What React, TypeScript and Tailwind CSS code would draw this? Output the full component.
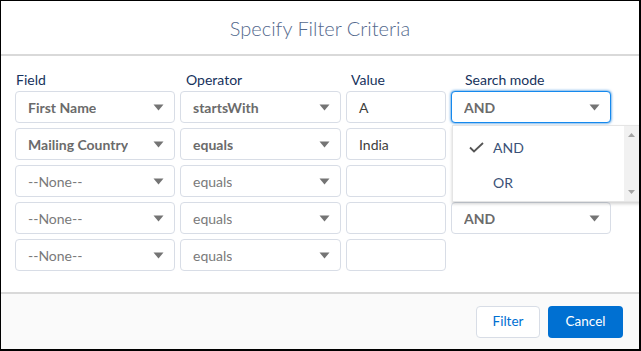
import React from "react";

const font = { fontFamily: '"Lato", "Open Sans", Arial, sans-serif' };

type Row = {
  field: string;
  op: string;
  value: string;
  mode?: string;
  strong?: boolean;
};

// rows 2 and 3 have their search mode hidden under the open list
const rows: Row[] = [
  { field: "First Name", op: "startsWith", value: "A", mode: "AND", strong: true },
  { field: "Mailing Country", op: "equals", value: "India", strong: true },
  { field: "--None--", op: "equals", value: "" },
  { field: "--None--", op: "equals", value: "", mode: "AND" },
  { field: "--None--", op: "equals", value: "" },
];

function Caret() {
  return (
    <svg width="11" height="7" viewBox="0 0 11 7" className="shrink-0">
      <path d="M0.5 0.5 L10.5 0.5 L5.5 6.5 Z" fill="#747474" />
    </svg>
  );
}

function Select({
  text,
  width,
  strong,
  focused,
}: {
  text: string;
  width: string;
  strong?: boolean;
  focused?: boolean;
}) {
  return (
    <div
      className={
        "h-8 rounded-[4px] bg-white flex items-center justify-between pl-3 pr-[10px] text-[14px] " +
        width +
        (focused
          ? " border border-[#1589ee] shadow-[0_0_3px_#0070d2]"
          : " border border-[#d8dde6]") +
        (strong ? " font-bold text-[#6b6b6b]" : " text-[#7a7a7a]")
      }
    >
      <span className="truncate">{text}</span>
      <Caret />
    </div>
  );
}

function Dropdown() {
  return (
    <div className="absolute left-px top-[34px] w-[190px] h-[77px] bg-white border border-[#e5e5e5] shadow-[0_2px_3px_rgba(0,0,0,0.18)] flex z-10">
      <div className="flex-1 py-1 text-[14px] text-[#3b5277]">
        <div className="h-[35px] flex items-center pl-4">
          <svg width="15" height="11" viewBox="0 0 15 11" className="mr-[9px]">
            <path d="M1 5.5 L5 9.5 L14 1" fill="none" stroke="#555" strokeWidth="1.8" />
          </svg>
          AND
        </div>
        <div className="h-[35px] flex items-center pl-[40px]">OR</div>
      </div>
      <div className="w-[17px] bg-[#f1f1f1] flex flex-col items-center justify-between py-[7px] pr-[2px]">
        <svg width="7" height="4" viewBox="0 0 7 4">
          <path d="M0 4 L7 4 L3.5 0 Z" fill="#a3a3a3" />
        </svg>
        <svg width="7" height="4" viewBox="0 0 7 4">
          <path d="M0 0 L7 0 L3.5 4 Z" fill="#a3a3a3" />
        </svg>
      </div>
    </div>
  );
}

export default function App() {
  return (
    <div
      className="w-[641px] h-[351px] bg-white border-l border-t border-r-2 border-b-2 border-black flex flex-col overflow-hidden"
      style={font}
    >
      <div className="h-[55px] shrink-0 flex items-center justify-center border-b-2 border-[#d9d9d9]">
        <h2 className="text-[20px] font-light text-[#54698d]">Specify Filter Criteria</h2>
      </div>

      <div className="flex-1 px-[14px] pt-4">
        <div className="flex text-[14px] leading-4 text-[#16325c] h-[19px]">
          <div className="w-[165px] pl-px">Field</div>
          <div className="w-[165px] pl-[6px]">Operator</div>
          <div className="w-[105px] pl-[6px]">Value</div>
          <div className="pl-[15px]">Search mode</div>
        </div>
        <div className="flex flex-col gap-[5px]">
          {rows.map((r, i) => (
            <div key={i} className="flex gap-[5px]">
              <Select text={r.field} width="w-[160px]" strong={r.strong} />
              <Select text={r.op} width="w-[161px]" strong={r.strong} />
              <div className="w-[100px] h-8 rounded-[4px] border border-[#d8dde6] bg-white flex items-center pl-3 text-[14px] text-[#3e3e3c]">
                {r.value}
              </div>
              {r.mode ? (
                <div className="relative">
                  <Select text={r.mode} width="w-[160px]" strong focused={i === 0} />
                  {i === 0 ? <Dropdown /> : null}
                </div>
              ) : null}
            </div>
          ))}
        </div>
      </div>

      <div className="h-[57px] shrink-0 border-t-2 border-[#d9d9d9] bg-[#fafafa] flex items-center justify-end gap-2 pr-4">
        <button className="h-8 w-16 rounded-[4px] border border-[#d8dde6] bg-white text-[13.5px] text-[#0070d2]">
          Filter
        </button>
        <button className="h-8 w-[75px] rounded-[4px] bg-[#0070d2] text-[13.5px] text-white">
          Cancel
        </button>
      </div>
    </div>
  );
}
